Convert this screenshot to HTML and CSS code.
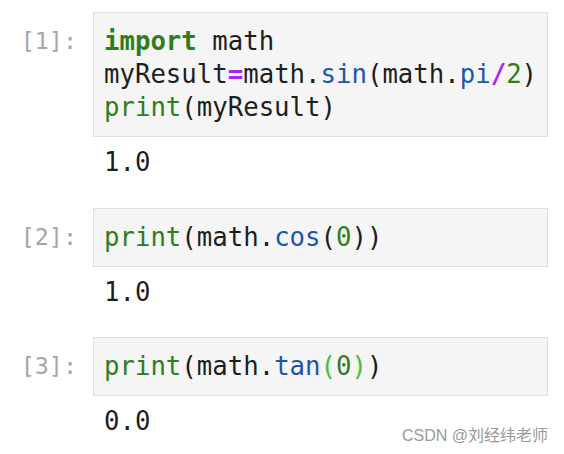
FILE: index.html
```html
<!DOCTYPE html>
<html>
<head>
<meta charset="utf-8">
<link rel="stylesheet" href="styles.css">
</head>
<body>
<div class="notebook">
  <div class="cell">
    <div class="row">
      <div class="prompt">[1]:</div>
      <div class="input"><pre><span class="kw">import</span> math
myResult<span class="op">=</span>math.<span class="prop">sin</span>(math.<span class="prop">pi</span><span class="op">/</span><span class="num">2</span>)
<span class="bi">print</span>(myResult)</pre></div>
    </div>
    <div class="row">
      <div class="prompt"></div>
      <div class="output"><pre>1.0</pre></div>
    </div>
  </div>
  <div class="cell">
    <div class="row">
      <div class="prompt">[2]:</div>
      <div class="input"><pre><span class="bi">print</span>(math.<span class="prop">cos</span>(<span class="num">0</span>))</pre></div>
    </div>
    <div class="row">
      <div class="prompt"></div>
      <div class="output"><pre>1.0</pre></div>
    </div>
  </div>
  <div class="cell">
    <div class="row">
      <div class="prompt">[3]:</div>
      <div class="input"><pre><span class="bi">print</span>(math.<span class="prop">tan</span><span class="match">(</span><span class="num">0</span><span class="match">)</span>)</pre></div>
    </div>
    <div class="row">
      <div class="prompt"></div>
      <div class="output"><pre>0.0</pre></div>
    </div>
  </div>
</div>
<div class="watermark">CSDN @刘经纬老师</div>
</body>
</html>
```
FILE: styles.css
```css
html, body {
  margin: 0;
  padding: 0;
  background: #ffffff;
}
body {
  width: 564px;
  height: 454px;
  position: relative;
  overflow: hidden;
}
.notebook {
  display: flex;
  flex-direction: column;
  padding-top: 12px;
}
.cell {
  display: flex;
  flex-direction: column;
  margin-bottom: 28.5px;
}
.row {
  display: grid;
  grid-template-columns: 93px 455px;
}
pre {
  margin: 0;
  font-family: "DejaVu Sans Mono", monospace;
  font-size: 25.7px;
  line-height: 33px;
  color: #1e1e1e;
}
.prompt {
  font-family: "DejaVu Sans Mono", monospace;
  font-size: 23.4px;
  line-height: 33px;
  color: #a6a6a6;
  text-align: right;
  padding-right: 16px;
  padding-top: 13px;
}
.input {
  background: #f5f5f5;
  border: 1px solid #e0e0e0;
  padding: 12px 10px;
}
.output {
  padding: 9px 11px 0;
}
.kw { color: #2e7d1b; font-weight: bold; }
.bi { color: #2e7d1b; }
.num { color: #2e7d1b; }
.op { color: #aa22ff; font-weight: bold; }
.prop { color: #1f55a8; }
.match { color: #46c133; }
.watermark {
  position: absolute;
  right: 16px;
  bottom: 8px;
  font-family: "Liberation Sans", "Noto Sans CJK SC", sans-serif;
  font-size: 16px;
  color: #9a9a9a;
}
```
